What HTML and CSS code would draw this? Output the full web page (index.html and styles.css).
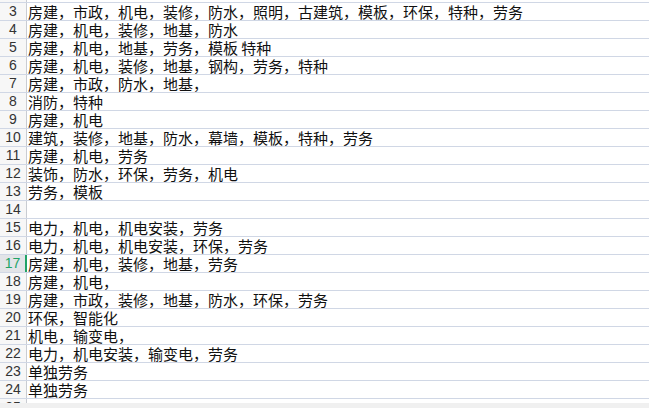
FILE: index.html
```html
<!DOCTYPE html>
<html lang="zh-CN">
<head>
<meta charset="utf-8">
<title>Sheet</title>
<link rel="stylesheet" href="styles.css">
</head>
<body>
<div class="sheet">
  <div class="row top"><div class="hd"></div><div class="cell"></div></div>
  <div class="row"><div class="hd">3</div><div class="cell">房建，市政，机电，装修，防水，照明，古建筑，模板，环保，特种，劳务</div></div>
  <div class="row"><div class="hd">4</div><div class="cell">房建，机电，装修，地基，防水</div></div>
  <div class="row"><div class="hd">5</div><div class="cell">房建，机电，地基，劳务，模板 特种</div></div>
  <div class="row"><div class="hd">6</div><div class="cell">房建，机电，装修，地基，钢构，劳务，特种</div></div>
  <div class="row"><div class="hd">7</div><div class="cell">房建，市政，防水，地基，</div></div>
  <div class="row"><div class="hd">8</div><div class="cell">消防，特种</div></div>
  <div class="row"><div class="hd">9</div><div class="cell">房建，机电</div></div>
  <div class="row"><div class="hd">10</div><div class="cell">建筑，装修，地基，防水，幕墙，模板，特种，劳务</div></div>
  <div class="row"><div class="hd">11</div><div class="cell">房建，机电，劳务</div></div>
  <div class="row"><div class="hd">12</div><div class="cell">装饰，防水，环保，劳务，机电</div></div>
  <div class="row"><div class="hd">13</div><div class="cell">劳务，模板</div></div>
  <div class="row"><div class="hd">14</div><div class="cell"></div></div>
  <div class="row"><div class="hd">15</div><div class="cell">电力，机电，机电安装，劳务</div></div>
  <div class="row"><div class="hd">16</div><div class="cell">电力，机电，机电安装，环保，劳务</div></div>
  <div class="row sel"><div class="hd">17</div><div class="cell">房建，机电，装修，地基，劳务</div></div>
  <div class="row"><div class="hd">18</div><div class="cell">房建，机电，</div></div>
  <div class="row"><div class="hd">19</div><div class="cell">房建，市政，装修，地基，防水，环保，劳务</div></div>
  <div class="row"><div class="hd">20</div><div class="cell">环保，智能化</div></div>
  <div class="row"><div class="hd">21</div><div class="cell">机电，输变电，</div></div>
  <div class="row"><div class="hd">22</div><div class="cell">电力，机电安装，输变电，劳务</div></div>
  <div class="row"><div class="hd">23</div><div class="cell">单独劳务</div></div>
  <div class="row"><div class="hd">24</div><div class="cell">单独劳务</div></div>
  <div class="row"><div class="hd">25</div><div class="cell"></div></div>
</div>
<div class="hbar"></div>
</body>
</html>
```
FILE: styles.css
```css
html, body {
  margin: 0;
  padding: 0;
  background: #ffffff;
  overflow: hidden;
}
body {
  width: 649px;
  height: 408px;
  position: relative;
}
.sheet {
  display: flex;
  flex-direction: column;
  height: 403px;
  overflow: hidden;
}
.row {
  display: flex;
  flex: 0 0 18px;
  height: 18px;
  box-sizing: border-box;
  border-bottom: 1px solid #d0d7e5;
}
.row.top {
  flex-basis: 3px;
  height: 3px;
}
.hd {
  flex: 0 0 27px;
  width: 27px;
  box-sizing: border-box;
  background: #f7f7f7;
  border-right: 1px solid #c9ccd2;
  font-family: "Liberation Sans", Arial, sans-serif;
  font-size: 14px;
  line-height: 17px;
  color: #333333;
  text-align: center;
}
.row .hd {
  border-bottom: 0;
}
.cell {
  flex: 1;
  padding-left: 1px;
  font-family: "Noto Sans CJK SC", sans-serif;
  font-size: 15px;
  line-height: 17px;
  color: #111111;
  white-space: nowrap;
  overflow: hidden;
}
.row.sel .hd {
  background: #e2e4e8;
  color: #21a366;
  border-right: 2px solid #21a366;
}
.hbar {
  position: absolute;
  left: 0;
  right: 0;
  bottom: 0;
  height: 5px;
  background: #f0f0f0;
}
```
